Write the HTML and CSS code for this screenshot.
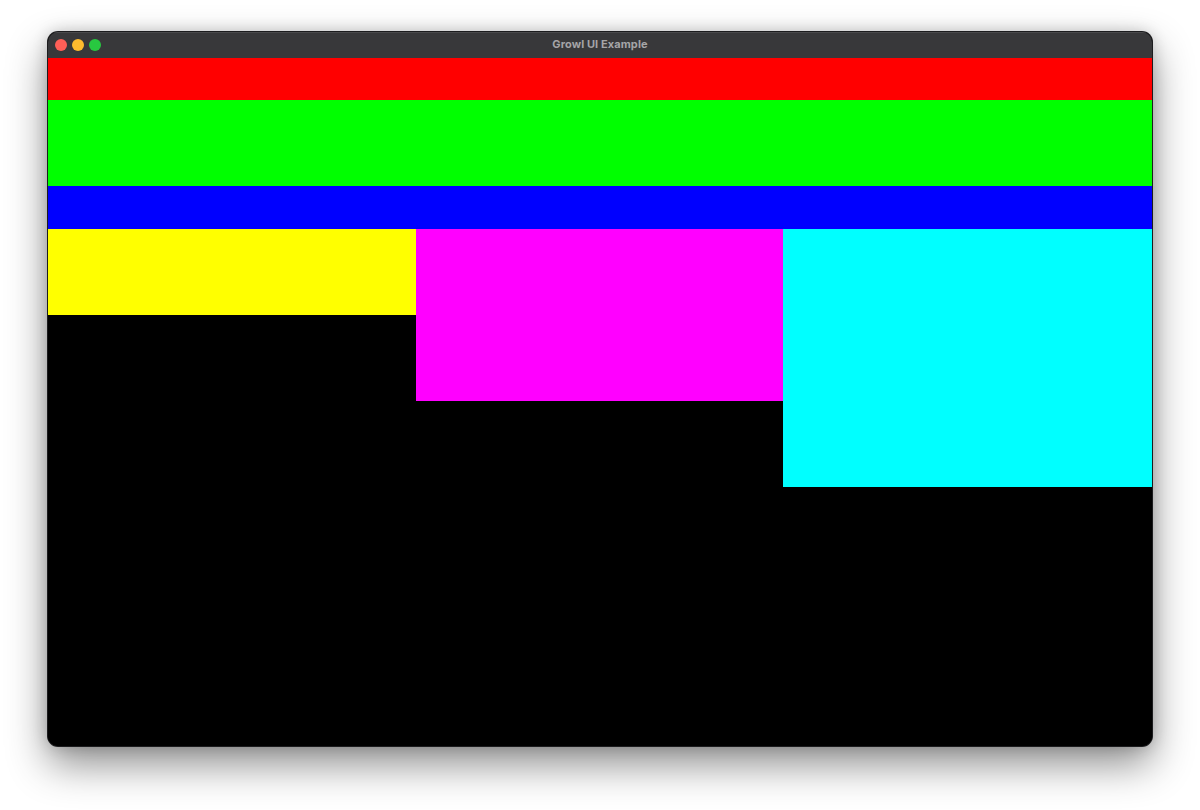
FILE: index.html
```html
<!DOCTYPE html>
<html>
<head>
<meta charset="utf-8">
<link rel="stylesheet" href="styles.css">
</head>
<body>
<div class="window">
  <div class="titlebar">
    <div class="lights">
      <span class="light red"></span>
      <span class="light yellow"></span>
      <span class="light green"></span>
    </div>
    <div class="title">Growl UI Example</div>
  </div>
  <div class="content">
    <div class="bar bar-red"></div>
    <div class="bar bar-green"></div>
    <div class="bar bar-blue"></div>
    <div class="row">
      <div class="col"><div class="box box-yellow"></div></div>
      <div class="col"><div class="box box-magenta"></div></div>
      <div class="col"><div class="box box-cyan"></div></div>
    </div>
  </div>
</div>
</body>
</html>
```
FILE: styles.css
```css
html, body {
  margin: 0;
  padding: 0;
  background: #ffffff;
  width: 1200px;
  height: 810px;
  overflow: hidden;
}
body {
  padding-top: 32px;
  padding-left: 48px;
  box-sizing: border-box;
  font-family: "Inter", "Liberation Sans", sans-serif;
}
.window {
  width: 1104px;
  height: 714px;
  border-radius: 10px;
  overflow: hidden;
  background: #000;
  box-shadow: 0 0 0 1px #1c1c1e, 0 18px 40px rgba(0,0,0,0.45), 0 0 16px rgba(0,0,0,0.2);
  display: flex;
  flex-direction: column;
}
.titlebar {
  height: 26px;
  flex: none;
  box-sizing: border-box;
  padding-bottom: 2px;
  background: #38383a;
  position: relative;
  display: flex;
  align-items: center;
  justify-content: center;
  box-shadow: inset 0 1px 0 #4a4a4c;
}
.lights {
  position: absolute;
  left: 7px;
  top: 7px;
  display: flex;
  gap: 5px;
}
.light {
  width: 12px;
  height: 12px;
  border-radius: 50%;
  display: block;
}
.light.red { background: #ff5f57; }
.light.yellow { background: #febc2e; }
.light.green { background: #28c840; }
.title {
  color: #a5a5a7;
  font-size: 11px;
  font-weight: 700;
  letter-spacing: 0.1px;
}
.content {
  flex: 1;
  background: #000;
  display: flex;
  flex-direction: column;
}
.bar { flex: none; }
.bar-red { height: 42px; background: #ff0000; }
.bar-green { height: 86px; background: #00ff00; }
.bar-blue { height: 43px; background: #0000ff; }
.row {
  display: grid;
  grid-template-columns: 368px 367px 369px;
  align-items: start;
}
.box-yellow { height: 86px; background: #ffff00; }
.box-magenta { height: 172px; background: #ff00ff; }
.box-cyan { height: 258px; background: #00ffff; }
```
